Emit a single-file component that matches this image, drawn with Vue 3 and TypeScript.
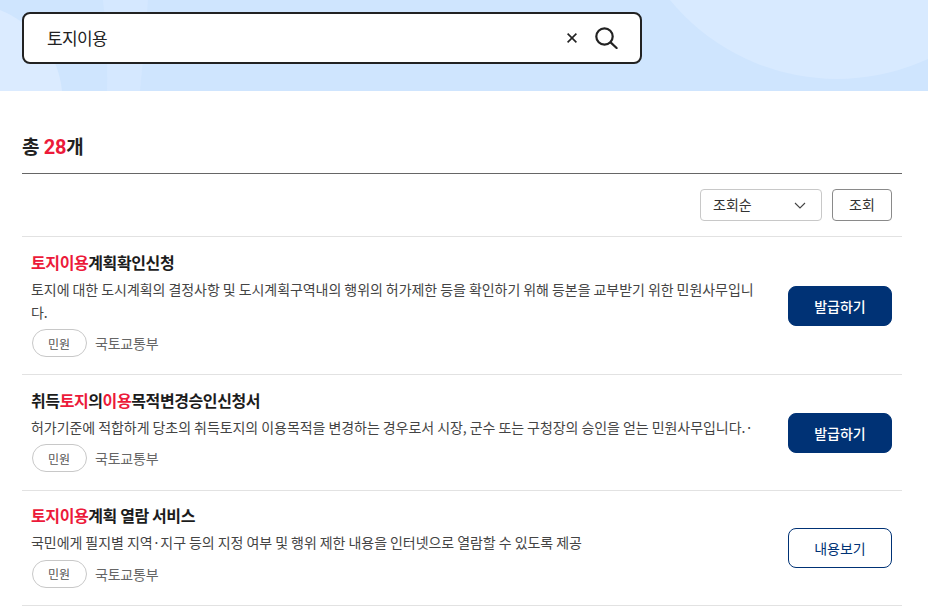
<script setup lang="ts">
interface Part { t: string; hit?: boolean }
interface Item { title: Part[]; desc: string; action: string; solid: boolean }
const items: Item[] = [
  {
    title: [{ t: '토지이용', hit: true }, { t: '계획확인신청' }],
    desc: '토지에 대한 도시계획의 결정사항 및 도시계획구역내의 행위의 허가제한 등을 확인하기 위해 등본을 교부받기 위한 민원사무입니다.',
    action: '발급하기',
    solid: true,
  },
  {
    title: [{ t: '취득' }, { t: '토지', hit: true }, { t: '의' }, { t: '이용', hit: true }, { t: '목적변경승인신청서' }],
    desc: '허가기준에 적합하게 당초의 취득토지의 이용목적을 변경하는 경우로서 시장, 군수 또는 구청장의 승인을 얻는 민원사무입니다.·',
    action: '발급하기',
    solid: true,
  },
  {
    title: [{ t: '토지이용', hit: true }, { t: '계획 열람 서비스' }],
    desc: '국민에게 필지별 지역·지구 등의 지정 여부 및 행위 제한 내용을 인터넷으로 열람할 수 있도록 제공',
    action: '내용보기',
    solid: false,
  },
]
</script>

<template>
  <div class="page">
    <header class="hero">
      <svg class="decor" width="928" height="91" viewBox="0 0 928 91">
        <circle cx="837" cy="-137" r="216" fill="#d8eaff" />
        <path d="M103 0H148C146 30 143 60 140 91H107C108 60 106 30 103 0Z" fill="#d5e8ff" />
        <path d="M0 10C30 22 58 50 62 91H0Z" fill="#dbebff" />
      </svg>
      <div class="search">
        <span class="query">토지이용</span>
        <svg class="clear" width="10" height="10" viewBox="0 0 10 10" fill="none" stroke="#222" stroke-width="1.6">
          <path d="M.6.6 9.4 9.4M9.4.6.6 9.4" />
        </svg>
        <svg class="glass" width="23" height="22" viewBox="0 0 23 22" fill="none" stroke="#222" stroke-width="2.2" stroke-linecap="round">
          <circle cx="9.5" cy="9.5" r="8.2" />
          <path d="M15.6 15.4 21.6 21" />
        </svg>
      </div>
    </header>

    <main class="content">
      <h2 class="total">총 <em>28</em>개</h2>
      <div class="toolbar">
        <div class="select">
          <span>조회순</span>
          <svg width="12" height="7" viewBox="0 0 12 7" fill="none" stroke="#444" stroke-width="1.1">
            <path d="M1 1 6 6 11 1" />
          </svg>
        </div>
        <button class="view" type="button">조회</button>
      </div>
      <ul class="list">
        <li v-for="item in items" :key="item.desc" class="row">
          <div class="body">
            <h3 class="title"><span v-for="p in item.title" :key="p.t" :class="{ hit: p.hit }">{{ p.t }}</span></h3>
            <p class="desc">{{ item.desc }}</p>
            <div class="meta">
              <span class="tag">민원</span>
              <span class="org">국토교통부</span>
            </div>
          </div>
          <button class="action" :class="{ solid: item.solid }" type="button">{{ item.action }}</button>
        </li>
      </ul>
    </main>
  </div>
</template>

<style scoped>
.page {
  width: 928px;
  height: 609px;
  overflow: hidden;
  background: #fff;
  font-family: "Noto Sans CJK KR", "Noto Sans", sans-serif;
  color: #222;
}
.hero {
  position: relative;
  height: 91px;
  box-sizing: border-box;
  padding: 12px 22px 0;
  overflow: hidden;
  background: #cfe5fe;
}
.decor {
  position: absolute;
  left: 0;
  top: 0;
}
.search {
  position: relative;
  box-sizing: border-box;
  width: 620px;
  height: 52px;
  display: flex;
  align-items: center;
  padding: 0 22px 0 23px;
  background: #fff;
  border: 2px solid #222;
  border-radius: 8px;
}
.query {
  flex: 1;
  font-size: 17px;
  line-height: 26px;
  letter-spacing: -0.6px;
}
.clear {
  margin-right: 18px;
}
.content {
  padding: 0 26px 0 22px;
}
.total {
  margin: 0;
  height: 83px;
  box-sizing: border-box;
  padding-top: 40px;
  border-bottom: 1px solid #666;
  font-size: 19px;
  line-height: 30px;
  font-weight: 700;
  letter-spacing: -0.5px;
}
.total em {
  margin-left: 1px;
  font-family: Roboto, sans-serif;
  font-size: 20px;
  font-style: normal;
  letter-spacing: -0.3px;
  color: #ec1a3a;
}
.toolbar {
  display: flex;
  justify-content: flex-end;
  gap: 10px;
  height: 63px;
  box-sizing: border-box;
  padding: 15px 10px 0 0;
  border-bottom: 1px solid #e2e2e2;
}
.select {
  box-sizing: border-box;
  width: 122px;
  height: 32px;
  display: flex;
  align-items: center;
  justify-content: space-between;
  padding: 0 15px 2px 12px;
  border: 1px solid #c8c8c8;
  border-radius: 4px;
  font-size: 14px;
  color: #333;
}
.select svg {
  margin-top: 2px;
}
.view {
  box-sizing: border-box;
  width: 60px;
  height: 32px;
  padding: 0 0 2px;
  background: #fff;
  border: 1px solid #8a8a8a;
  border-radius: 4px;
  font: inherit;
  font-size: 14px;
  color: #333;
}
.list {
  margin: 0;
  padding: 0;
  list-style: none;
}
.row {
  display: flex;
  align-items: center;
  justify-content: space-between;
  padding: 12.5px 10px 17.4px 9px;
  border-bottom: 1px solid #e2e2e2;
}
.body {
  width: 725px;
}
.title {
  margin: 0;
  font-size: 16px;
  line-height: 24px;
  font-weight: 700;
  letter-spacing: -0.4px;
  color: #1c1c1c;
}
.hit {
  color: #ec1a3a;
}
.desc {
  margin: 4px 0 0;
  font-size: 14px;
  line-height: 23px;
  letter-spacing: -0.06px;
  color: #444;
}
.meta {
  display: flex;
  align-items: center;
  gap: 8px;
  margin-top: 5.5px;
  padding-left: 1px;
}
.tag {
  box-sizing: border-box;
  width: 55px;
  height: 28px;
  padding-right: 1px;
  display: flex;
  align-items: center;
  justify-content: center;
  border: 1px solid #c8c8c8;
  border-radius: 14px;
  font-size: 12px;
  color: #555;
}
.org {
  font-size: 14px;
  letter-spacing: -0.2px;
  color: #666;
}
.action {
  box-sizing: border-box;
  flex: none;
  width: 104px;
  height: 40px;
  margin-top: 5px;
  padding: 0;
  background: #fff;
  border: 1px solid #003275;
  border-radius: 8px;
  font: inherit;
  font-size: 14px;
  color: #003275;
}
.action.solid {
  background: #003275;
  color: #fff;
  font-weight: 500;
}
</style>
